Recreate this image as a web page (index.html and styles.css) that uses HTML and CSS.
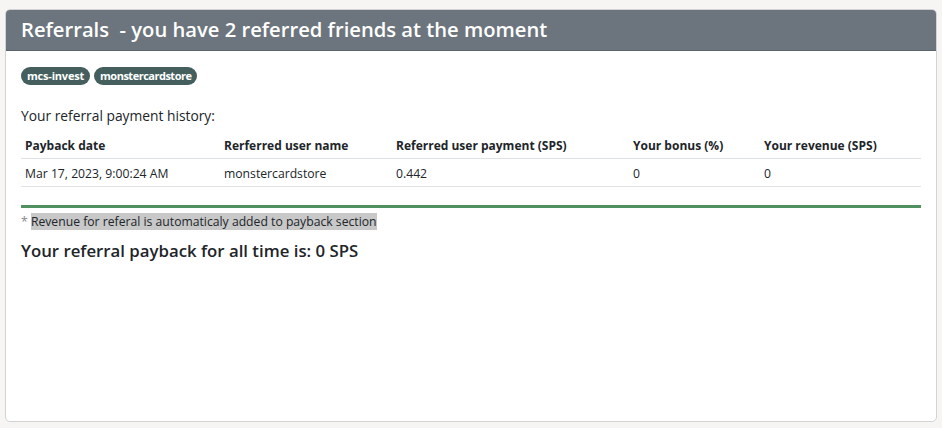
FILE: index.html
```html
<!DOCTYPE html>
<html>
<head>
<meta charset="utf-8">
<link rel="stylesheet" href="styles.css">
</head>
<body>
<div class="card">
  <div class="card-header">Referrals&nbsp; - you have 2 referred friends at the moment</div>
  <div class="card-body">
    <div class="badges">
      <span class="badge">mcs-invest</span>
      <span class="badge">monstercardstore</span>
    </div>
    <div class="history-title">Your referral payment history:</div>
    <table class="table">
      <thead>
        <tr>
          <th class="c1">Payback date</th>
          <th class="c2">Rerferred user name</th>
          <th class="c3">Referred user payment (SPS)</th>
          <th class="c4">Your bonus (%)</th>
          <th class="c5">Your revenue (SPS)</th>
        </tr>
      </thead>
      <tbody>
        <tr>
          <td>Mar 17, 2023, 9:00:24 AM</td>
          <td>monstercardstore</td>
          <td>0.442</td>
          <td>0</td>
          <td>0</td>
        </tr>
      </tbody>
    </table>
    <div class="divider"></div>
    <div class="note"><span class="star">*</span> <span class="mark">Revenue for referal is automaticaly added to payback section</span></div>
    <div class="total">Your referral payback for all time is: 0 SPS</div>
  </div>
</div>
</body>
</html>
```
FILE: styles.css
```css
html, body {
  margin: 0;
  padding: 0;
  background: #f6f5f3;
}
body {
  padding: 9px 5px 0 5px;
  font-family: "Open Sans", "Noto Sans", sans-serif;
  color: #212529;
}
.card {
  width: 932px;
  height: 413px;
  box-sizing: border-box;
  background: #fff;
  border: 1px solid #d3d3d3;
  border-radius: 5px;
  overflow: hidden;
}
.card-header {
  background: #6c757d;
  color: #fff;
  font-size: 20.2px;
  font-weight: 600;
  height: 41px;
  line-height: 39px;
  padding: 0 15px;
  box-sizing: border-box;
  border-bottom: 1px solid #5c646b;
}
.card-body {
  padding: 16px 15px 0 15px;
}
.badges {
  display: flex;
  gap: 4px;
}
.badge {
  background: #455f5e;
  color: #fff;
  font-size: 11px;
  font-weight: 700;
  height: 18px;
  line-height: 18px;
  padding: 0 6px;
  border-radius: 9px;
  letter-spacing: -0.5px;
}
.badge:first-child {
  letter-spacing: -0.2px;
}
.history-title {
  margin-top: 22px;
  font-size: 13.8px;
  line-height: 18px;
}
.table {
  width: 100%;
  border-collapse: collapse;
  margin-top: 11px;
  font-size: 12px;
}
.table th, .table td {
  text-align: left;
  padding: 0 4px;
  border-bottom: 1px solid #dee2e6;
}
.table th {
  font-weight: 700;
  height: 22px;
  vertical-align: top;
  line-height: 20px;
}
.table td {
  height: 25px;
  padding-top: 2px;
  line-height: 25px;
  font-size: 12.2px;
}
.c1 { width: 191px; }
.c2 { width: 164px; }
.c3 { width: 229px; }
.c4 { width: 123px; }
.divider {
  margin-top: 18px;
  height: 3px;
  background: #4f9160;
}
.note {
  margin-top: 5px;
  font-size: 12.2px;
  line-height: 18px;
}
.star { color: #888; }
.mark { background: #c8c8c8; }
.total {
  margin-top: 9px;
  font-size: 16.8px;
  font-weight: 600;
  line-height: 22px;
}
```
